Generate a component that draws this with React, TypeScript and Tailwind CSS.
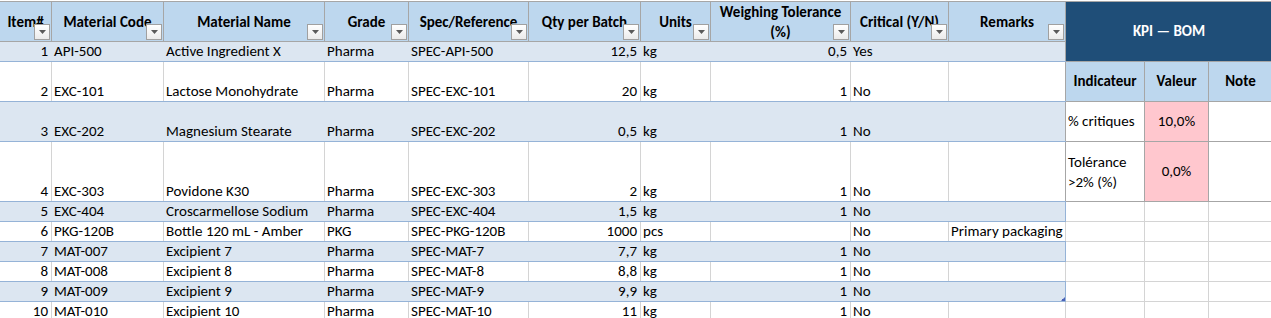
import React from 'react';

type Row = {
  item: string;
  code: string;
  name: string;
  grade: string;
  spec: string;
  qty: string;
  unit: string;
  tol: string;
  crit: string;
  remarks: string;
  h: string;
};

const rows: Row[] = [
  { item: '1', code: 'API-500', name: 'Active Ingredient X', grade: 'Pharma', spec: 'SPEC-API-500', qty: '12,5', unit: 'kg', tol: '0,5', crit: 'Yes', remarks: '', h: 'h-[20px]' },
  { item: '2', code: 'EXC-101', name: 'Lactose Monohydrate', grade: 'Pharma', spec: 'SPEC-EXC-101', qty: '20', unit: 'kg', tol: '1', crit: 'No', remarks: '', h: 'h-[40px]' },
  { item: '3', code: 'EXC-202', name: 'Magnesium Stearate', grade: 'Pharma', spec: 'SPEC-EXC-202', qty: '0,5', unit: 'kg', tol: '1', crit: 'No', remarks: '', h: 'h-[40px]' },
  { item: '4', code: 'EXC-303', name: 'Povidone K30', grade: 'Pharma', spec: 'SPEC-EXC-303', qty: '2', unit: 'kg', tol: '1', crit: 'No', remarks: '', h: 'h-[60px]' },
  { item: '5', code: 'EXC-404', name: 'Croscarmellose Sodium', grade: 'Pharma', spec: 'SPEC-EXC-404', qty: '1,5', unit: 'kg', tol: '1', crit: 'No', remarks: '', h: 'h-[20px]' },
  { item: '6', code: 'PKG-120B', name: 'Bottle 120 mL - Amber', grade: 'PKG', spec: 'SPEC-PKG-120B', qty: '1000', unit: 'pcs', tol: '', crit: 'No', remarks: 'Primary packaging', h: 'h-[20px]' },
  { item: '7', code: 'MAT-007', name: 'Excipient 7', grade: 'Pharma', spec: 'SPEC-MAT-7', qty: '7,7', unit: 'kg', tol: '1', crit: 'No', remarks: '', h: 'h-[20px]' },
  { item: '8', code: 'MAT-008', name: 'Excipient 8', grade: 'Pharma', spec: 'SPEC-MAT-8', qty: '8,8', unit: 'kg', tol: '1', crit: 'No', remarks: '', h: 'h-[20px]' },
  { item: '9', code: 'MAT-009', name: 'Excipient 9', grade: 'Pharma', spec: 'SPEC-MAT-9', qty: '9,9', unit: 'kg', tol: '1', crit: 'No', remarks: '', h: 'h-[20px]' },
  { item: '10', code: 'MAT-010', name: 'Excipient 10', grade: 'Pharma', spec: 'SPEC-MAT-10', qty: '11', unit: 'kg', tol: '1', crit: 'No', remarks: '', h: 'h-[20px]' },
];

// column widths incl. right gridline
const widths = ['w-[52px]', 'w-[112px]', 'w-[161px]', 'w-[84px]', 'w-[120px]', 'w-[112px]', 'w-[70px]', 'w-[140px]', 'w-[98px]', 'w-[117px]'];
const headers = ['Item#', 'Material Code', 'Material Name', 'Grade', 'Spec/Reference', 'Qty per Batch', 'Units', 'Weighing Tolerance (%)', 'Critical (Y/N)', 'Remarks'];
const rightAligned = [true, false, false, false, false, true, false, true, false, false];

function FilterButton() {
  return (
    <div className="absolute right-[1px] bottom-[1px] w-4 h-4 border border-[#a0a0a0] bg-linear-to-b from-white to-[#ebebeb] flex items-center justify-center">
      <svg width="7" height="4" viewBox="0 0 7 4">
        <polygon points="0,0 7,0 3.5,4" fill="#5a5a5a" />
      </svg>
    </div>
  );
}

function HeaderRow() {
  return (
    <div className="flex h-[41px] border-t border-b border-[#a6a6a6] bg-[#bdd7ee]">
      {headers.map((h, i) => (
        <div
          key={h}
          className={`${widths[i]} relative shrink-0 h-full border-r border-[#a6a6a6] overflow-hidden flex items-center justify-center text-center font-bold leading-[20px] ${i === 7 ? 'whitespace-normal' : 'whitespace-nowrap'}`}
        >
          {i === 7 ? (
            <span>
              Weighing Tolerance
              <br />
              (%)
            </span>
          ) : (
            <span>{h}</span>
          )}
          <FilterButton />
        </div>
      ))}
    </div>
  );
}

function DataRow({ row, idx }: { row: Row; idx: number }) {
  const banded = idx % 2 === 0;
  const values = [row.item, row.code, row.name, row.grade, row.spec, row.qty, row.unit, row.tol, row.crit, row.remarks];
  const lastBorder = idx < 4 ? 'border-[#a6a6a6]' : banded && idx < 9 ? 'border-[#95b3d7]' : 'border-[#d4d4d4]';
  return (
    <div className={`flex ${row.h} border-b border-[#95b3d7] ${banded ? 'bg-[#dce6f1]' : 'bg-white'}`}>
      {values.map((v, i) => (
        <div
          key={i}
          className={`${widths[i]} relative shrink-0 h-full border-r overflow-hidden whitespace-nowrap flex items-end pb-px leading-[18px] ${
            i === 9 ? lastBorder : banded ? 'border-[#dce6f1]' : 'border-[#d4d4d4]'
          } ${rightAligned[i] ? 'justify-end pr-[3px]' : 'justify-start pl-[2px]'}`}
        >
          {v}
          {i === 9 && idx === 8 && (
            <svg className="absolute right-0 bottom-0" width="4" height="4" viewBox="0 0 4 4">
              <polygon points="4,0 4,4 0,4" fill="#4a62b8" />
              <rect x="1" y="2" width="3" height="2" fill="#4a62b8" />
            </svg>
          )}
        </div>
      ))}
    </div>
  );
}

function KpiPanel() {
  return (
    <div className="flex flex-col w-[206px] shrink-0">
      <div className="h-[61px] border-t border-b border-[#a6a6a6] bg-[#1f4e78] text-white font-bold flex items-center justify-center">
        KPI — BOM
      </div>
      <div className="flex h-[40px] border-b border-[#a6a6a6] bg-[#bdd7ee] font-bold">
        <div className="w-[79px] shrink-0 border-r border-[#a6a6a6] flex items-center justify-center">Indicateur</div>
        <div className="w-[64px] shrink-0 border-r border-[#a6a6a6] flex items-center justify-center">Valeur</div>
        <div className="w-[63px] shrink-0 flex items-center justify-center">Note</div>
      </div>
      <div className="flex h-[40px] border-b border-[#a6a6a6]">
        <div className="w-[79px] shrink-0 border-r border-[#a6a6a6] flex items-center pl-[2px] whitespace-nowrap">% critiques</div>
        <div className="w-[64px] shrink-0 border-r border-[#a6a6a6] bg-[#ffc7ce] flex items-center justify-center">10,0%</div>
        <div className="w-[63px] shrink-0" />
      </div>
      <div className="flex h-[60px] border-b border-[#a6a6a6]">
        <div className="w-[79px] shrink-0 border-r border-[#a6a6a6] flex items-center pl-[2px] leading-[20px]">
          <span>
            Tolérance
            <br />
            &gt;2% (%)
          </span>
        </div>
        <div className="w-[64px] shrink-0 border-r border-[#a6a6a6] bg-[#ffc7ce] flex items-center justify-center">0,0%</div>
        <div className="w-[63px] shrink-0" />
      </div>
      {[0, 1, 2, 3, 4, 5].map((i) => (
        <div key={i} className="flex h-[20px] border-b border-[#d4d4d4]">
          <div className="w-[79px] shrink-0 border-r border-[#d4d4d4]" />
          <div className="w-[64px] shrink-0 border-r border-[#d4d4d4]" />
          <div className="w-[63px] shrink-0" />
        </div>
      ))}
    </div>
  );
}

export default function App() {
  return (
    <div className="w-[1271px] h-[318px] overflow-hidden bg-white pt-px font-[Calibri,Carlito,Lato,sans-serif] text-[15px] text-black">
      <div className="flex">
        <div className="flex flex-col w-[1066px] shrink-0">
          <HeaderRow />
          {rows.map((r, i) => (
            <DataRow key={r.item} row={r} idx={i} />
          ))}
        </div>
        <KpiPanel />
      </div>
    </div>
  );
}
